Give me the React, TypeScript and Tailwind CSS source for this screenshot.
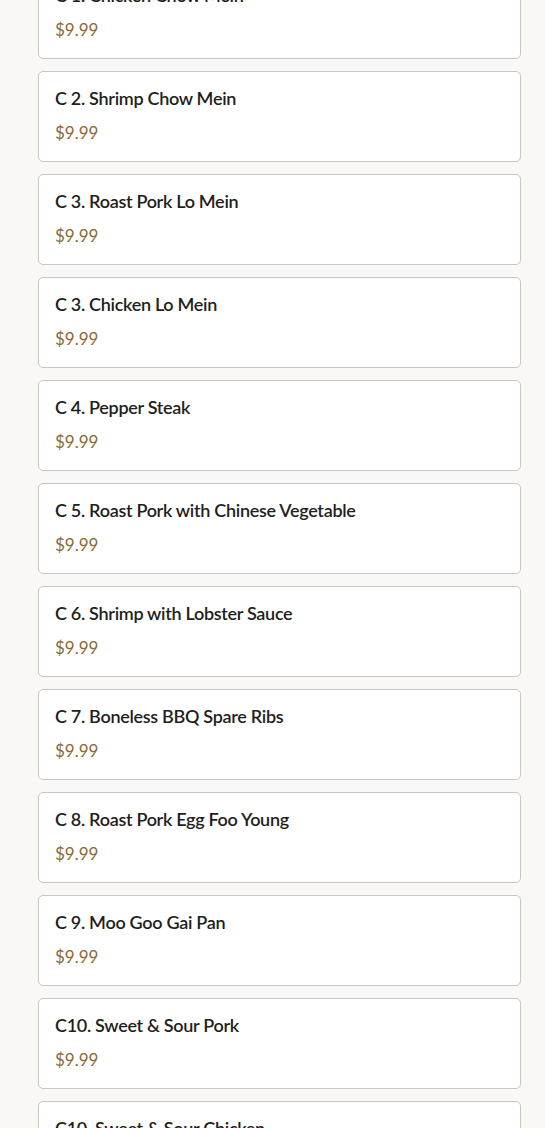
import React from "react";

const items = [
  "C 1. Chicken Chow Mein",
  "C 2. Shrimp Chow Mein",
  "C 3. Roast Pork Lo Mein",
  "C 3. Chicken Lo Mein",
  "C 4. Pepper Steak",
  "C 5. Roast Pork with Chinese Vegetable",
  "C 6. Shrimp with Lobster Sauce",
  "C 7. Boneless BBQ Spare Ribs",
  "C 8. Roast Pork Egg Foo Young",
  "C 9. Moo Goo Gai Pan",
  "C10. Sweet & Sour Pork",
  "C10. Sweet & Sour Chicken",
  "C11. Shrimp Egg Foo Young",
];

export default function App() {
  return (
    <div
      className="min-h-[1128px] bg-[#f9f8f6] overflow-hidden"
      style={{ fontFamily: "Lato, 'Noto Sans', sans-serif" }}
    >
      <div className="-mt-[32px] ml-[38px] w-[483px] flex flex-col gap-3">
        {items.map((name, i) => (
          <div
            key={i}
            className="bg-white border border-[#c9c7c3] rounded-[5px] px-4 pt-[14px] pb-4"
          >
            <div className="text-[18px] leading-6 font-semibold tracking-[-0.3px] text-[#221e1c]">
              {name}
            </div>
            <div className="mt-[11px] text-[17px] leading-6 text-[#8a6a35]">
              $9.99
            </div>
          </div>
        ))}
      </div>
    </div>
  );
}
